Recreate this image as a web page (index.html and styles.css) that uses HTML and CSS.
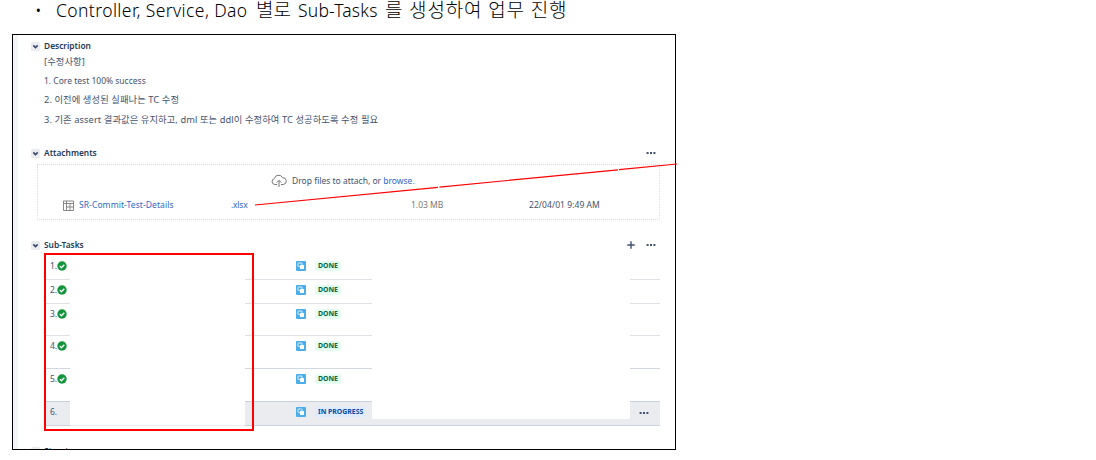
FILE: index.html
```html
<!DOCTYPE html>
<html lang="ko">
<head>
<meta charset="utf-8">
<title>Sub-Tasks</title>
<link rel="stylesheet" href="styles.css">
</head>
<body>
<svg class="defs" width="0" height="0">
  <symbol id="chevron" viewBox="0 0 9 9"><rect width="9" height="9" rx="1.5" fill="#ebecf0"/><path d="M2.3 3.4l2.2 2.2 2.2-2.2" fill="none" stroke="#344563" stroke-width="1.5"/></symbol>
  <symbol id="check" viewBox="0 0 10 10"><circle cx="5" cy="5" r="4.7" fill="#14943c"/><path d="M2.8 5.1l1.6 1.6 2.9-3" fill="none" stroke="#fff" stroke-width="1.3"/></symbol>
  <symbol id="subtask" viewBox="0 0 10 10"><rect width="10" height="10" rx="1" fill="#4baee8"/><rect x="2" y="2" width="4" height="3.6" rx=".6" fill="none" stroke="#fff" stroke-width=".8"/><rect x="4" y="4" width="4" height="4" rx=".5" fill="#fff"/></symbol>
  <symbol id="dots" viewBox="0 0 10 4"><path d="M.6 1h2v2h-2zM4 1h2v2H4zM7.4 1h2v2h-2z" fill="#42526e"/></symbol>
</svg>
<h1 class="headline"><span class="bullet">•</span><span class="headline-text"><span class="latin">Controller, Service, Dao</span><span class="byeol">별로</span><span class="latin sub">Sub-Tasks</span><span class="rest">를 생성하여 업무 진행</span></span></h1>
<main class="frame">
  <section class="description">
    <h2 class="heading"><svg class="chevron"><use href="#chevron"/></svg>Description</h2>
    <div class="copy">
      <p class="korean">[수정사항]</p>
      <p>1. Core test 100% success</p>
      <p class="korean">2. 이전에 생성된 실패나는 TC 수정</p>
      <p class="korean">3. 기존 assert 결과값은 유지하고, dml 또는 ddl이 수정하여 TC 성공하도록 수정 필요</p>
    </div>
  </section>
  <section class="attachments">
    <h2 class="heading"><svg class="chevron"><use href="#chevron"/></svg>Attachments<span class="tools"><svg class="dots"><use href="#dots"/></svg></span></h2>
    <div class="dropzone">
      <div class="drop">
        <svg class="cloud" viewBox="0 0 16 14"><path d="M6 10.5H3.8a3 3 0 0 1-.4-5.9A4.3 4.3 0 0 1 11.5 3.7a3.4 3.4 0 0 1 .7 6.8H10M8 13V6.5M5.8 8.5L8 6.3l2.2 2.2" fill="none" stroke="#777" stroke-width="1"/></svg>
        <span>Drop files to attach, or <a>browse.</a></span>
      </div>
      <div class="file">
        <svg class="sheet" viewBox="0 0 11 11"><path d="M.5 1h10v9.5H.5zM.5 3.5h10M3.5 1v9.5M7 3.5v7M3.5 7h7" fill="none" stroke="#888"/></svg>
        <a class="name">SR-Commit-Test-Details</a><a class="ext">.xlsx</a><span class="size">1.03 MB</span><time class="date">22/04/01 9:49 AM</time>
      </div>
    </div>
  </section>
  <section class="subtasks">
    <h2 class="heading"><svg class="chevron"><use href="#chevron"/></svg>Sub-Tasks<span class="tools"><svg class="plus" viewBox="0 0 8 8"><path d="M4 .3v7.4M.3 4h7.4" stroke="#42526e" stroke-width="1.4"/></svg><svg class="dots"><use href="#dots"/></svg></span></h2>
    <div class="list">
      <div class="row r1"><div class="num">1.<svg class="check"><use href="#check"/></svg></div><div class="status"><svg class="type"><use href="#subtask"/></svg><b class="badge">DONE</b></div><div class="end"></div></div>
      <div class="row r2"><div class="num">2.<svg class="check"><use href="#check"/></svg></div><div class="status"><svg class="type"><use href="#subtask"/></svg><b class="badge">DONE</b></div><div class="end"></div></div>
      <div class="row r3"><div class="num">3.<svg class="check"><use href="#check"/></svg></div><div class="status"><svg class="type"><use href="#subtask"/></svg><b class="badge">DONE</b></div><div class="end"></div></div>
      <div class="row r4"><div class="num">4.<svg class="check"><use href="#check"/></svg></div><div class="status"><svg class="type"><use href="#subtask"/></svg><b class="badge">DONE</b></div><div class="end"></div></div>
      <div class="row r5"><div class="num">5.<svg class="check"><use href="#check"/></svg></div><div class="status"><svg class="type"><use href="#subtask"/></svg><b class="badge">DONE</b></div><div class="end"></div></div>
      <div class="row r6"><div class="num">6.</div><div class="rule"></div><div class="status"><svg class="type"><use href="#subtask"/></svg><b class="badge progress">IN PROGRESS</b></div><div class="strip"></div><div class="end"><svg class="dots"><use href="#dots"/></svg></div></div>
      <div class="marker"></div>
    </div>
  </section>
  <section class="next"><h2 class="heading"><svg class="chevron"><use href="#chevron"/></svg>Structure</h2></section>
</main>
<svg class="pointer" viewBox="0 0 424 44"><path d="M1 42L184 24.3M185.5 24.1L364 6.8M365 6.7L423 1" stroke="#f00" stroke-width="1.2"/></svg>
</body>
</html>
```

FILE: styles.css
```css
* { box-sizing: border-box; }
body { margin: 0; width: 1096px; height: 460px; overflow: hidden; background: #fff; color: #42526e; font: 8.5px/12px "Noto Sans", "Noto Sans CJK KR", sans-serif; }
h1, h2, p { margin: 0; font-weight: 400; }
svg { display: block; flex: none; }
.defs { position: absolute; }
.headline { display: flex; height: 34px; padding-left: 35px; color: #000; font-size: 17.5px; font-weight: 300; line-height: 21px; white-space: nowrap; }
.bullet { width: 21px; }
.headline-text { display: flex; }
.latin { width: 200px; letter-spacing: .4px; }
.byeol { width: 42px; font-size: 19px; line-height: 20px; }
.latin.sub { width: 87px; letter-spacing: .2px; }
.rest { font-size: 19px; line-height: 20px; letter-spacing: .85px; }
.frame { width: 664px; height: 416px; margin-left: 12px; border: 1px solid #000; overflow: hidden; box-shadow: inset 5px 0 #f4f5f7; }
.heading { display: flex; align-items: center; height: 12px; padding-left: 18px; color: #253858; font-size: 8.4px; font-weight: 600; }
.chevron { width: 9px; height: 9px; margin-right: 4px; }
.tools { display: flex; align-items: center; gap: 11px; margin-left: auto; padding-right: 19px; }
.dots { width: 10px; height: 4px; }
.plus { width: 8px; height: 8px; }
.description { height: 107px; padding-top: 5px; }
.copy { padding-left: 31px; white-space: nowrap; }
.copy p { height: 19.2px; padding-top: 4px; }
.copy .korean { font-size: 9.3px; letter-spacing: .08px; }
.attachments { height: 91px; padding-top: 5px; }
.dropzone { width: 623px; height: 56px; margin: 5px 0 0 24px; border: 1px dotted #dcdde2; }
.drop { display: flex; align-items: center; gap: 5px; height: 24px; padding: 8px 0 0 233px; }
.cloud { width: 16px; height: 14px; }
a { color: #3268c8; }
.file { display: grid; grid-template-columns: 16px 152px 180px 118px 1fr; align-items: center; height: 12px; margin-top: 10px; padding-left: 25px; }
.sheet { width: 11px; height: 11px; }
.name { letter-spacing: .08px; }
.ext { letter-spacing: -.2px; }
.size { color: #777; }
.date { letter-spacing: .06px; }
.subtasks { height: 207px; padding-top: 6px; }
.list { position: relative; margin-top: 2px; padding: 1px 16px 0 33px; }
.row { display: grid; grid-template-columns: 24px 175px 127px 258px 30px; height: 33px; }
.num, .status, .end { display: flex; align-items: flex-start; padding-top: 4px; border-bottom: 1px solid #dfe1e6; }
.num { padding-left: 4px; }
.status { grid-column: 3; padding-left: 51px; }
.end { grid-column: 5; }
.check { width: 10px; height: 10px; margin: 1px 0 0; }
.type { width: 10px; height: 10px; margin-top: 1px; }
.badge { height: 10px; margin: 1px 0 0 9px; padding: 0 3px; border-radius: 2px; background: #e3fcef; color: #006644; font-size: 6.9px; line-height: 10px; }
.badge.progress { background: #deebff; color: #0747a6; }
.r1 { height: 26px; }
.r1 > div { padding-top: 6px; }
.r2 { height: 24px; }
.r3 { height: 32px; }
.r4 > div { border-color: #d3d8e0; }
.r5 > div { border-color: #c7d1dc; }
.r6 { height: 24px; }
.r6 > div { background: #ebecf0; border-color: #ccd3dd; }
.r6 .rule { grid-column: 2; height: 1px; align-self: end; }
.r6 .strip { grid-column: 4; height: 7px; align-self: end; border-bottom: 1px solid #ccd3dd; }
.r6 .end { padding: 9px 0 0 9px; }
.marker { position: absolute; top: 0; left: 31px; width: 210px; height: 178px; border: 2px solid #f00; }
.next { padding-top: 5px; }
.pointer { position: absolute; top: 163px; left: 254px; width: 424px; height: 44px; }
```
